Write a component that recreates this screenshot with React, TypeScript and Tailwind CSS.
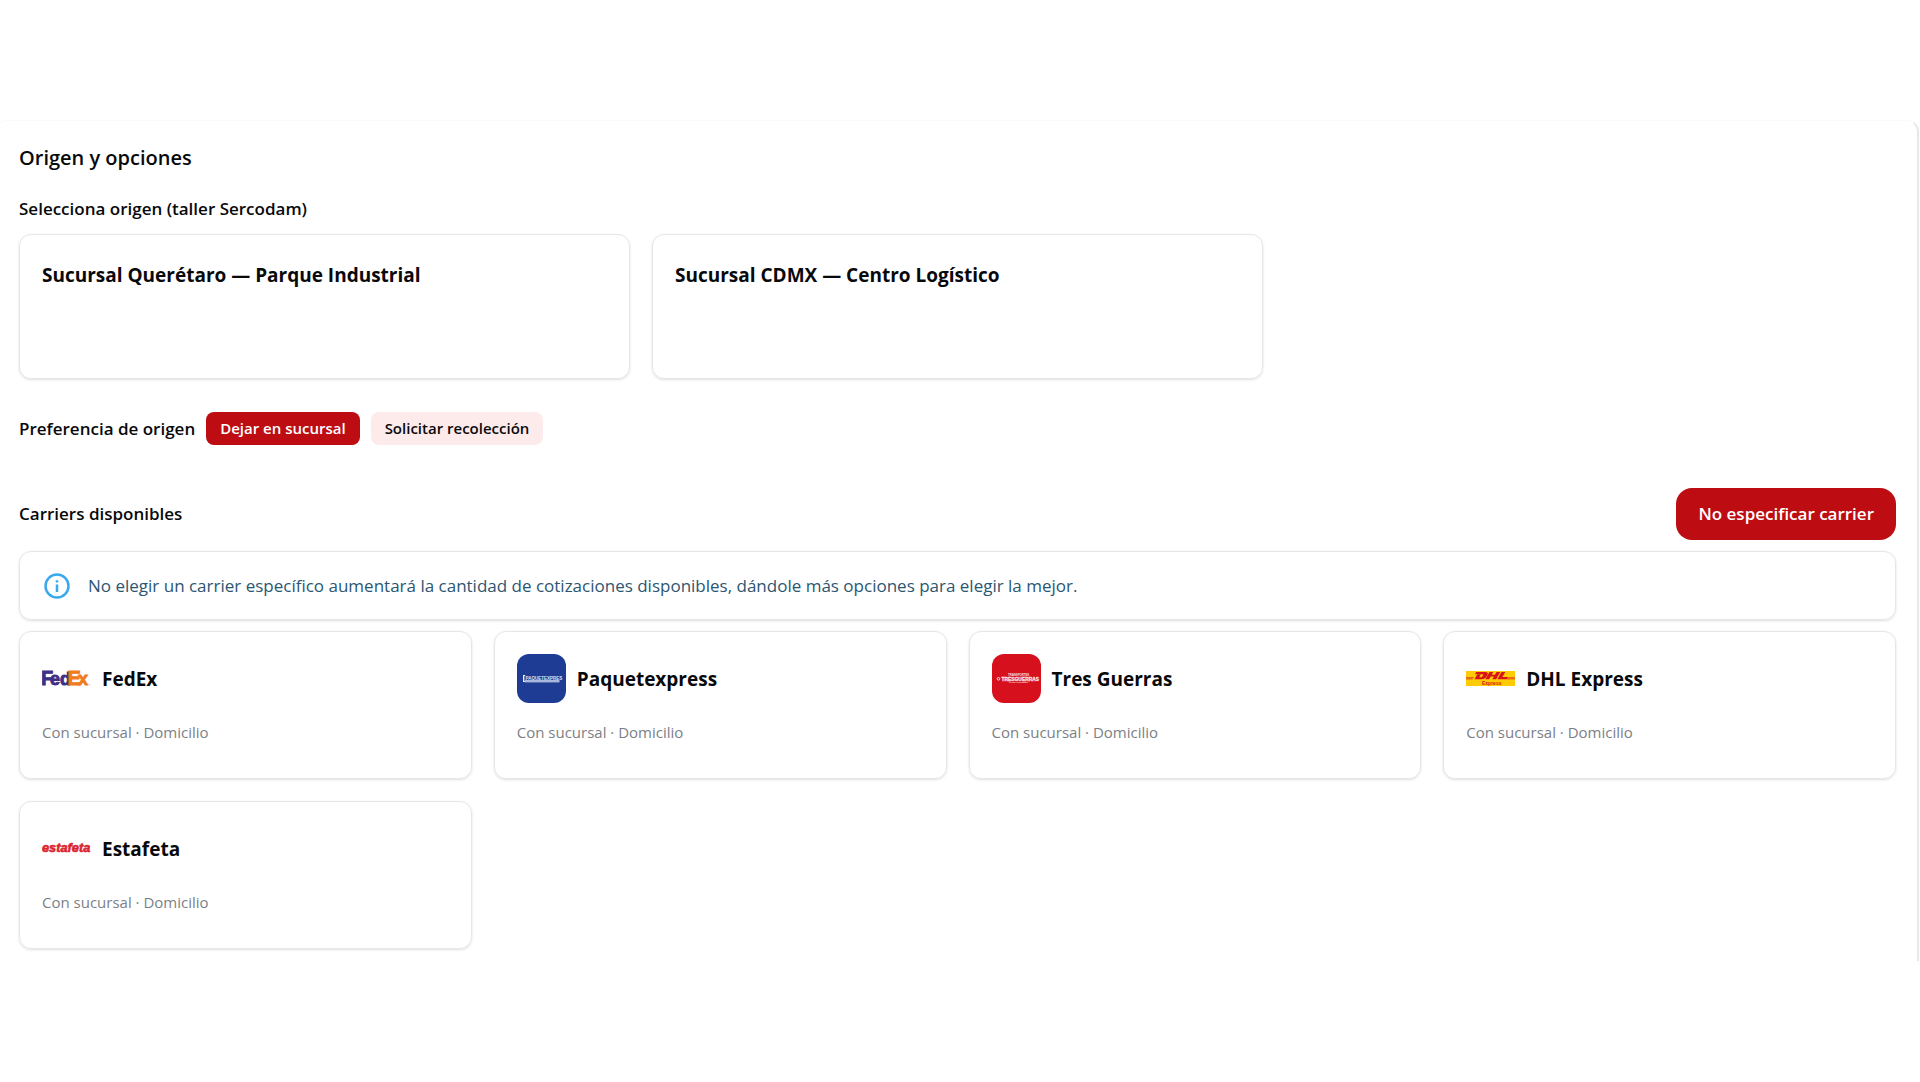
import React, { useState } from 'react';

interface Carrier {
    id: string;
    name: string;
    services: string;
    logo: React.ReactNode;
}

const FedExLogo = () => (
    <svg viewBox="0 0 49 49" className="size-[49px]" aria-hidden="true">
        <g fontFamily="'Liberation Sans', Arial, sans-serif" fontWeight="bold" strokeWidth="0.9">
            <text x="-1" y="31" fill="#3f2f86" stroke="#3f2f86" fontSize="20">F</text>
            <text x="8" y="31" fill="#3f2f86" stroke="#3f2f86" fontSize="18">ed</text>
            <text x="25.500" y="31" fill="#f07c1e" stroke="#f07c1e" fontSize="20">E</text>
            <text x="36" y="31" fill="#f07c1e" stroke="#f07c1e" fontSize="18">x</text>
        </g>
        <circle cx="47.500" cy="30.500" r="0.7" fill="#f5b98a" />
    </svg>
);

const PaquetexpressLogo = () => (
    <svg viewBox="0 0 49 49" className="size-[49px] rounded-xl" aria-hidden="true">
        <rect width="49" height="49" fill="#1e3c94" />
        <path d="M6 21h2.200v1H7.400v5H9v1H6z" fill="#e8eefa" />
        <text x="8.500" y="25.500" fill="#dfe6f5" fontFamily="'Liberation Sans', Arial, sans-serif" fontWeight="bold" fontSize="4.500">PAQUETEXPRES</text>
        <rect x="8" y="26" width="34.500" height="2.400" fill="#a9b8dc" />
    </svg>
);

const TresGuerrasLogo = () => (
    <svg viewBox="0 0 49 49" className="size-[49px] rounded-xl" aria-hidden="true">
        <rect width="49" height="49" fill="#d6101c" />
        <g fill="#fbe0e2" fontFamily="'Liberation Sans', Arial, sans-serif" fontWeight="bold">
            <text x="16" y="21.500" fontSize="2.800">TRANSPORTES</text>
            <text x="9.500" y="26.500" fontSize="4.900" stroke="#fbe0e2" strokeWidth="0.3">TRESGUERRAS</text>
            <text x="17" y="29.200" fontSize="2.200">CARGA EXPRESS</text>
        </g>
        <circle cx="6.500" cy="24.800" r="1.300" fill="none" stroke="#fbe0e2" strokeWidth="1" />
    </svg>
);

const DhlLogo = () => (
    <svg viewBox="0 0 49 49" className="size-[49px]" aria-hidden="true">
        <rect y="17" width="49" height="15" fill="#fecb04" />
        <g fill="#d8141b">
            <path d="M0 23.4h8l-.5.6H0zM0 24.6h7l-.5.6H0zM42.500 23.400H49v.6h-7zM41.500 24.600H49v.6h-8z" />
            <path d="M10.200 18H19c2.800 0 3.400 1.400 2.500 3l-1 1.600c-1.100 1.800-2.800 2.600-5 2.600H8.500l2.700-4.600h3.600l-1.500 2.700h1.600c.7 0 1-.3 1.400-.9l.7-1.200c.4-.7.100-1-.6-1H8.900z" />
            <path d="M23.500 18h3.800l-1.500 2.700h3.200L30.500 18h3.800l-4.200 7.200h-3.800l1.600-2.700h-3.200l-1.600 2.700h-3.800z" />
            <path d="M35.500 18h3.800l-2.900 5h5.800l-1.300 2.200h-9.600z" />
            <text x="16" y="30.500" fontFamily="'Liberation Sans', Arial, sans-serif" fontWeight="bold" fontSize="5">Express</text>
        </g>
    </svg>
);

const EstafetaLogo = () => (
    <svg viewBox="0 0 49 49" className="size-[49px]" aria-hidden="true">
        <text x="0" y="28" fill="#dc2430" stroke="#dc2430" strokeWidth="0.6" fontFamily="'Liberation Sans', Arial, sans-serif" fontWeight="bold" fontStyle="italic" fontSize="12.800">estafeta</text>
    </svg>
);

const origins = ['Sucursal Querétaro — Parque Industrial', 'Sucursal CDMX — Centro Logístico'];

const preferences = ['Dejar en sucursal', 'Solicitar recolección'];

const carriers: Carrier[] = [
    { id: 'fedex', name: 'FedEx', services: 'Con sucursal · Domicilio', logo: <FedExLogo /> },
    { id: 'paquetexpress', name: 'Paquetexpress', services: 'Con sucursal · Domicilio', logo: <PaquetexpressLogo /> },
    { id: 'tresguerras', name: 'Tres Guerras', services: 'Con sucursal · Domicilio', logo: <TresGuerrasLogo /> },
    { id: 'dhl', name: 'DHL Express', services: 'Con sucursal · Domicilio', logo: <DhlLogo /> },
    { id: 'estafeta', name: 'Estafeta', services: 'Con sucursal · Domicilio', logo: <EstafetaLogo /> },
];

export default function App() {
    const [preference, setPreference] = useState(preferences[0]);

    return (
        <main className="min-h-screen overflow-hidden bg-white pt-[120px] font-['Open_Sans','Noto_Sans',sans-serif] text-[#09090b]">
            <div className="-ml-[6px] mr-px rounded-t-xl border-x-2 border-t border-x-[#e8e8e8] border-t-[#fafafa] pt-[19px] pr-[21px] pb-3 pl-[23px]">
                <h2 className="text-xl leading-9 font-semibold">Origen y opciones</h2>

                {/* Origin */}
                <section className="mt-[17px]">
                    <h3 className="text-[17px] leading-8 font-semibold">Selecciona origen (taller Sercodam)</h3>
                    <div className="mt-[9px] grid grid-cols-3 gap-[22px]">
                        {origins.map(origin => (
                            <button
                                key={origin}
                                type="button"
                                className="flex h-[145px] items-start rounded-xl border border-[#e6e6e6] p-[22px] text-left text-[19px] leading-9 font-bold shadow-sm"
                            >
                                {origin}
                            </button>
                        ))}
                    </div>
                </section>

                {/* Drop-off or pick-up */}
                <section className="mt-[33px] flex items-center gap-[11px]">
                    <h3 className="text-[17px] leading-8 font-semibold">Preferencia de origen</h3>
                    {preferences.map(option => (
                        <button
                            key={option}
                            type="button"
                            aria-pressed={preference === option}
                            onClick={() => setPreference(option)}
                            className={`h-[33px] rounded-lg px-3.5 text-[15px] font-semibold ${preference === option ? 'bg-[#bd0d12] text-white' : 'bg-[#fcebea]'}`}
                        >
                            {option}
                        </button>
                    ))}
                </section>

                {/* Carriers */}
                <section className="mt-[43px]">
                    <div className="flex items-center justify-between">
                        <h3 className="text-[17px] leading-8 font-semibold">Carriers disponibles</h3>
                        <button type="button" className="h-[52px] rounded-2xl bg-[#bd0d12] px-[22px] text-[17px] font-semibold text-white">
                            No especificar carrier
                        </button>
                    </div>

                    <div className="mt-[11px] flex h-[69px] items-center gap-[18px] rounded-xl border border-[#e6e6e6] px-6 shadow-sm">
                        <svg viewBox="0 0 26 26" className="size-[26px] shrink-0" fill="none" stroke="#38a9ee" strokeWidth="2.500" aria-hidden="true">
                            <circle cx="13" cy="13" r="11.500" />
                            <path d="M13 11.500v7.500M13 7.200v2.400" />
                        </svg>
                        <p className="text-[17px] text-[#2b5672]">
                            No elegir un carrier específico aumentará la cantidad de cotizaciones disponibles, dándole más opciones para elegir la mejor.
                        </p>
                    </div>

                    <div className="mt-[11px] grid grid-cols-4 gap-[22px]">
                        {carriers.map(carrier => (
                            <button
                                key={carrier.id}
                                type="button"
                                className="flex h-[148px] flex-col items-start rounded-xl border border-[#e6e6e6] p-[22px] text-left shadow-sm"
                            >
                                <span className="flex items-center gap-[11px]">
                                    {carrier.logo}
                                    <span className="text-[19px] leading-7 font-bold">{carrier.name}</span>
                                </span>
                                <span className="mt-[17px] text-[15px] leading-6 text-[#7c7f86]">{carrier.services}</span>
                            </button>
                        ))}
                    </div>
                </section>
            </div>
        </main>
    );
}
